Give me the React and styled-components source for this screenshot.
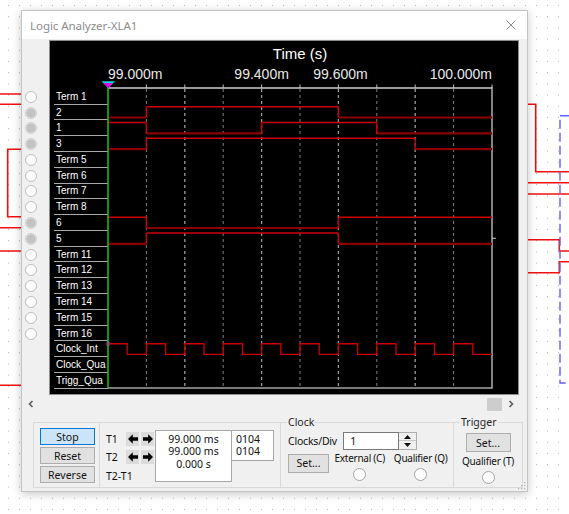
import React from 'react';
import styled, { createGlobalStyle } from 'styled-components';

const GlobalStyle = createGlobalStyle`
  html, body { margin: 0; padding: 0; }
  body {
    width: 569px; height: 514px; overflow: hidden;
    background: #fff;
    font-family: "Noto Sans", "Liberation Sans", sans-serif;
  }
`;

const ROWS = ['Term 1', '2', '1', '3', 'Term 5', 'Term 6', 'Term 7', 'Term 8', '6', '5',
  'Term 11', 'Term 12', 'Term 13', 'Term 14', 'Term 15', 'Term 16', 'Clock_Int', 'Clock_Qua', 'Trigg_Qua'];
const CONNECTED = [false, true, true, true, false, false, false, false, true, true,
  false, false, false, false, false, false];

const X0 = 108;
const DX = 38.4;
const xs = (d) => X0 + DX * d;
const ROW_TOP = 88.9;
const RH = 15.79;
const rowTop = (r) => ROW_TOP + RH * r;

const SIGNALS = [
  { row: 1, segs: [[0, 0], [1, 1], [6, 0]] },
  { row: 2, segs: [[0, 1], [1, 0], [4, 1], [7, 0]] },
  { row: 3, segs: [[0, 0], [1, 1], [8, 0]] },
  { row: 8, segs: [[0, 1], [1, 0], [6, 1]] },
  { row: 9, segs: [[0, 0], [1, 1], [6, 0]] },
];

const Desktop = styled.div`
  position: relative;
  width: 569px;
  height: 514px;
  overflow: hidden;
`;

const Schematic = styled.svg`
  position: absolute;
  left: 0;
  top: 0;
`;

const Window = styled.section`
  position: absolute;
  left: 21px;
  top: 10px;
  width: 507px;
  height: 482px;
  box-sizing: border-box;
  border: 1px solid #c4c4c4;
  background: #f0f0f0;
  box-shadow: 0 2px 9px rgba(0, 0, 0, 0.22);
  display: flex;
  flex-direction: column;
`;

const TitleBar = styled.header`
  height: 28px;
  flex: none;
  background: #fff;
  display: flex;
  align-items: center;
  justify-content: space-between;
  padding: 0 11px 0 8px;
`;

const Title = styled.span`
  font-size: 11.6px;
  color: #8d8d8d;
  letter-spacing: -0.1px;
`;

const MainRow = styled.div`
  display: flex;
  flex: none;
  height: 356px;
  padding-top: 1px;
  box-sizing: border-box;
`;

const RadioColumn = styled.div`
  width: 27px;
  flex: none;
  box-sizing: border-box;
  padding: 48.9px 0 0 3px;
  display: flex;
  flex-direction: column;
`;

const RadioSlot = styled.div`
  height: ${RH}px;
  display: flex;
  align-items: center;
`;

const PinRadio = styled.span`
  width: 12px;
  height: 12px;
  box-sizing: border-box;
  border-radius: 50%;
  border: 1px solid ${(p) => (p.$on ? '#cfcfcf' : '#bdbdbd')};
  background: ${(p) => (p.$on
    ? 'radial-gradient(circle, #c3c3c3 0 4.3px, #e6e6e6 4.8px)'
    : '#fff')};
`;

const Panel = styled.div`
  width: 470px;
  height: 355px;
  flex: none;
  box-sizing: border-box;
  border: 1px solid #8e8e8e;
  background: #000;
  display: flex;
  flex-direction: column;
`;

const TimeTitle = styled.div`
  margin-left: 58px;
  width: 384px;
  height: 25px;
  line-height: 25px;
  text-align: center;
  font-family: "Liberation Sans", Arial, sans-serif;
  font-size: 15px;
  color: #fff;
`;

const ChartRow = styled.div`
  display: flex;
`;

const LabelColumn = styled.div`
  margin-left: 4px;
  width: 54px;
  padding-top: 22.9px;
  display: flex;
  flex-direction: column;
`;

const SignalLabel = styled.div`
  height: ${RH}px;
  box-sizing: border-box;
  border-bottom: 1.6px solid #a9a9a9;
  display: flex;
  align-items: center;
  padding-left: 2px;
  font-family: "Liberation Sans", Arial, sans-serif;
  font-size: 10px;
  color: #fff;
  white-space: nowrap;
`;

const Chart = styled.svg`
  overflow: visible;
  display: block;
  flex: none;
`;

const ScrollRow = styled.div`
  height: 16px;
  margin-top: 1px;
  flex: none;
  display: flex;
  padding: 0 10px 0 3px;
`;

const ScrollButton = styled.div`
  width: 12px;
  display: flex;
  align-items: center;
  justify-content: center;
`;

const ScrollTrack = styled.div`
  flex: 1;
  display: flex;
  justify-content: flex-end;
  padding: 2px 3px 1px 0;
`;

const Thumb = styled.div`
  width: 15px;
  background: #cdcdcd;
`;

const Controls = styled.div`
  display: flex;
  margin: 10px 0 0 11px;
  height: 66px;
  flex: none;
`;

const Group = styled.div`
  position: relative;
  box-sizing: border-box;
  height: 66px;
  width: ${(p) => p.$w}px;
  margin-left: ${(p) => (p.$first ? 0 : -1)}px;
  border: 1px solid #d9d9d9;
  display: flex;
  flex-direction: ${(p) => (p.$column ? 'column' : 'row')};
`;

const Legend = styled.span`
  position: absolute;
  left: 6px;
  top: -8px;
  padding: 0 1px;
  background: #f0f0f0;
  font-size: 10.5px;
  line-height: 14px;
  color: #1e1e1e;
`;

const ButtonCol = styled.div`
  width: 66px;
  box-sizing: border-box;
  border-right: 1px solid #d9d9d9;
  padding: 5px 0 0 6px;
  display: flex;
  flex-direction: column;
  gap: 2px;
`;

const Button = styled.div`
  width: ${(p) => p.$w}px;
  height: ${(p) => p.$h}px;
  box-sizing: border-box;
  border: 1px solid ${(p) => (p.$primary ? '#0078d7' : '#adadad')};
  background: ${(p) => (p.$primary ? '#cce4f7' : '#e1e1e1')};
  display: flex;
  align-items: center;
  justify-content: center;
  font-size: 10.5px;
  color: #111;
  flex: none;
`;

const TimeGrid = styled.div`
  padding: 7px 0 0 6px;
  display: grid;
  grid-template-columns: 20px 29px 77px 42px;
  grid-template-rows: 18px 17px 21px;
  font-size: 10.5px;
  color: #111;
`;

const GridLabel = styled.div`
  display: flex;
  align-items: center;
  white-space: nowrap;
  grid-column: ${(p) => p.$span || 'auto'};
`;

const ArrowPair = styled.div`
  display: flex;
  gap: 2px;
  align-items: center;
`;

const ArrowButton = styled.div`
  width: 13px;
  height: 14px;
  background: #dcdcdc;
  display: flex;
  align-items: center;
  justify-content: center;
`;

const ValueBox = styled.div`
  grid-column: 3;
  grid-row: 1 / 4;
  align-self: start;
  height: 52px;
  box-sizing: border-box;
  border: 1px solid #a8a8a8;
  background: #fff;
  padding-top: 1.5px;
  display: flex;
  flex-direction: column;
  align-items: center;
  line-height: 12.7px;
`;

const HexBox = styled.div`
  grid-column: 4;
  grid-row: 1 / 3;
  align-self: start;
  margin-left: -1px;
  height: 31px;
  box-sizing: border-box;
  border: 1px solid #a8a8a8;
  background: #fff;
  padding: 1.5px 0 0 4px;
  display: flex;
  flex-direction: column;
  line-height: 12.7px;
`;

const ClockBody = styled.div`
  padding: 8.7px 0 0 7px;
  display: flex;
  flex-direction: column;
  font-size: 10.5px;
  color: #111;
`;

const FieldRow = styled.div`
  display: flex;
  align-items: ${(p) => (p.$top ? 'flex-start' : 'center')};
  height: ${(p) => p.$h}px;
  margin-top: ${(p) => p.$mt || 0}px;
`;

const FieldLabel = styled.span`
  width: 55.3px;
  white-space: nowrap;
  letter-spacing: -0.2px;
`;

const NumberInput = styled.div`
  width: 56px;
  height: 18.3px;
  box-sizing: border-box;
  border: 1px solid #7a7a7a;
  background: #fff;
  padding-left: 6px;
  display: flex;
  align-items: center;
`;

const Spinner = styled.div`
  width: 17.4px;
  height: 18.3px;
  box-sizing: border-box;
  border: 1px solid #adadad;
  border-left: none;
  background: #f0f0f0;
  display: flex;
  flex-direction: column;
`;

const SpinHalf = styled.div`
  flex: 1;
  display: flex;
  align-items: center;
  justify-content: center;
  border-top: ${(p) => (p.$lower ? '1px solid #c8c8c8' : 'none')};
`;

const Option = styled.div`
  width: ${(p) => p.$w}px;
  margin-left: ${(p) => p.$ml}px;
  margin-top: -1.5px;
  display: flex;
  flex-direction: column;
  align-items: center;
  white-space: nowrap;
  line-height: 13px;
  font-size: 10px;
  letter-spacing: -0.25px;
`;

const RoundRadio = styled.span`
  width: 13px;
  height: 13px;
  box-sizing: border-box;
  border-radius: 50%;
  border: 1px solid #a3a3a3;
  background: #fff;
  margin-top: ${(p) => p.$mt}px;
`;

const TriggerBody = styled.div`
  padding-top: 10px;
  display: flex;
  flex-direction: column;
  align-items: center;
  font-size: 10.5px;
  color: #111;
`;

const TriggerText = styled.span`
  margin-top: 3px;
  line-height: 13px;
  white-space: nowrap;
  font-size: 10px;
  letter-spacing: -0.2px;
`;

const Grip = styled.svg`
  position: absolute;
  right: 1px;
  bottom: 1px;
`;

const ArrowIcon = ({ dir }) => (
  <svg width="10" height="10" viewBox="0 0 10 10">
    <path
      d="M0 5 L4.8 0.2 L4.8 3.3 L10 3.3 L10 6.7 L4.8 6.7 L4.8 9.8 Z"
      fill="#000"
      transform={dir === 'right' ? 'translate(10 0) scale(-1 1)' : undefined}
    />
  </svg>
);

const Chevron = ({ dir }) => (
  <svg width="6" height="8" viewBox="0 0 6 8">
    <path
      d={dir === 'left' ? 'M4.5 1 L1.5 4 L4.5 7' : 'M1.5 1 L4.5 4 L1.5 7'}
      fill="none"
      stroke="#5a5a5a"
      strokeWidth="1.6"
    />
  </svg>
);

function SignalTrace({ row, segs }) {
  const top = rowTop(row);
  const hi = top + 2;
  const lo = top + 12.8;
  const parts = [];
  segs.forEach(([d, lvl], i) => {
    const end = i + 1 < segs.length ? segs[i + 1][0] : 10;
    const y = lvl ? hi : lo;
    parts.push(
      <line key={`h${i}`} x1={xs(d)} x2={xs(end)} y1={y} y2={y}
        stroke={lvl ? '#d00000' : '#8a0000'} strokeWidth={lvl ? 1.4 : 2.2} />
    );
    if (i > 0) {
      parts.push(
        <line key={`v${i}`} x1={xs(d)} x2={xs(d)} y1={hi} y2={lo}
          stroke="#d00000" strokeWidth="1.4" />
      );
    }
  });
  return <g>{parts}</g>;
}

function ClockTrace() {
  const top = rowTop(16);
  const hi = top + 2.2;
  const lo = top + 12.8;
  let d = `M${X0} ${hi}`;
  for (let k = 0; k < 10; k++) {
    const m = xs(k) + DX / 2;
    const b = xs(k + 1);
    d += ` L${m} ${hi} L${m} ${lo} L${b} ${lo}`;
    if (k < 9) d += ` L${b} ${hi}`;
  }
  return (
    <g>
      <path d={d} fill="none" stroke="#cc0000" strokeWidth="1.3" />
      <circle cx={X0} cy={hi} r="2" fill="none" stroke="#c000c0" strokeWidth="1" />
    </g>
  );
}

function WaveChart() {
  const divs = Array.from({ length: 11 }, (_, i) => i);
  return (
    <Chart width="392" height="326" viewBox="108 66 392 326">
      <g fontFamily='"Liberation Sans", Arial, sans-serif' fontSize="14" fill="#e8e8e8">
        <text x={108} y={78.5} textAnchor="start">99.000m</text>
        <text x={xs(4)} y={78.5} textAnchor="middle">99.400m</text>
        <text x={340.5} y={78.5} textAnchor="middle">99.600m</text>
        <text x={492} y={78.5} textAnchor="end">100.000m</text>
      </g>
      {divs.slice(1, 10).map((i) => (
        <line key={`g${i}`} x1={xs(i)} x2={xs(i)} y1={89} y2={388}
          stroke={i % 2 === 0 ? '#9a9a9a' : '#7e7e7e'} strokeWidth={i % 2 === 0 ? 1.3 : 1}
          strokeDasharray="3 3" />
      ))}
      {divs.map((i) => (
        <line key={`t${i}`} x1={xs(i)} x2={xs(i)} y1={84.5} y2={88}
          stroke="#bdbdbd" strokeWidth="1" />
      ))}
      <line x1={108} x2={492} y1={88} y2={88} stroke="#cfcfcf" strokeWidth="1.4" />
      <line x1={492} x2={492} y1={87} y2={388.5} stroke="#bdbdbd" strokeWidth="1.4" />
      <line x1={108} x2={492} y1={388} y2={388} stroke="#a5a5a5" strokeWidth="1.4" />
      <line x1={492} x2={496} y1={238.3} y2={238.3} stroke="#cfcfcf" strokeWidth="1" />
      {SIGNALS.map((s) => <SignalTrace key={s.row} {...s} />)}
      <ClockTrace />
      <line x1={108} x2={108} y1={88} y2={388} stroke="#19c419" strokeWidth="1.5" />
      <polygon points="101.5,81.3 115,81.3 108.3,88.3" fill="#00d8e0" />
      <polygon points="103.6,83 113,83 108.3,88.3" fill="#e000e0" />
    </Chart>
  );
}

function SchematicLayer() {
  return (
    <Schematic width="569" height="514" viewBox="0 0 569 514">
      <defs>
        <pattern id="dots" x="8" y="5" width="11" height="11.2" patternUnits="userSpaceOnUse">
          <rect x="0" y="0" width="1" height="1" fill="#b4b4b4" />
        </pattern>
      </defs>
      <rect x="0" y="0" width="569" height="514" fill="url(#dots)" />
      <g fill="none" stroke="#f01010" strokeWidth="1.6">
        <path d="M0 94 H22 M0 104.3 H22 M22 149.3 H7.7 V216.7 H22 M0 227.7 H22 M0 251 H22 M0 385.3 H22" />
        <path d="M528 104.3 H535.7 V171.7 H569 M528 182.7 H569 M528 194 H569 M528 239.7 H559.3 V251 H569 M528 272.7 H559.3 V261.7 H569" />
      </g>
      <path d="M569 115.7 H560 V383 H569" fill="none" stroke="#6060ff" strokeWidth="1.4" strokeDasharray="9 4" />
    </Schematic>
  );
}

export default function App() {
  return (
    <>
      <GlobalStyle />
      <Desktop>
        <SchematicLayer />
        <Window>
          <TitleBar>
            <Title>Logic Analyzer-XLA1</Title>
            <svg width="10" height="10" viewBox="0 0 10 10">
              <path d="M0.5 0.5 L9.5 9.5 M9.5 0.5 L0.5 9.5" stroke="#8d8d8d" strokeWidth="1" />
            </svg>
          </TitleBar>
          <MainRow>
            <RadioColumn>
              {CONNECTED.map((on, i) => (
                <RadioSlot key={i}><PinRadio $on={on} /></RadioSlot>
              ))}
            </RadioColumn>
            <Panel>
              <TimeTitle>Time (s)</TimeTitle>
              <ChartRow>
                <LabelColumn>
                  {ROWS.map((r) => <SignalLabel key={r}>{r}</SignalLabel>)}
                </LabelColumn>
                <WaveChart />
              </ChartRow>
            </Panel>
          </MainRow>
          <ScrollRow>
            <ScrollButton><Chevron dir="left" /></ScrollButton>
            <ScrollTrack><Thumb /></ScrollTrack>
            <ScrollButton><Chevron dir="right" /></ScrollButton>
          </ScrollRow>
          <Controls>
            <Group $w={248} $first>
              <ButtonCol>
                <Button $w={55} $h={17} $primary>Stop</Button>
                <Button $w={55} $h={17}>Reset</Button>
                <Button $w={55} $h={17}>Reverse</Button>
              </ButtonCol>
              <TimeGrid>
                <GridLabel>T1</GridLabel>
                <ArrowPair>
                  <ArrowButton><ArrowIcon dir="left" /></ArrowButton>
                  <ArrowButton><ArrowIcon dir="right" /></ArrowButton>
                </ArrowPair>
                <ValueBox>
                  <span>99.000 ms</span>
                  <span>99.000 ms</span>
                  <span>0.000 s</span>
                </ValueBox>
                <HexBox>
                  <span>0104</span>
                  <span>0104</span>
                </HexBox>
                <GridLabel>T2</GridLabel>
                <ArrowPair>
                  <ArrowButton><ArrowIcon dir="left" /></ArrowButton>
                  <ArrowButton><ArrowIcon dir="right" /></ArrowButton>
                </ArrowPair>
                <GridLabel $span="1 / 3">T2-T1</GridLabel>
              </TimeGrid>
            </Group>
            <Group $w={174} $column>
              <Legend>Clock</Legend>
              <ClockBody>
                <FieldRow $h={18.3}>
                  <FieldLabel>Clocks/Div</FieldLabel>
                  <NumberInput>1</NumberInput>
                  <Spinner>
                    <SpinHalf>
                      <svg width="7" height="4" viewBox="0 0 7 4"><path d="M0 4 L3.5 0 L7 4 Z" fill="#111" /></svg>
                    </SpinHalf>
                    <SpinHalf $lower>
                      <svg width="7" height="4" viewBox="0 0 7 4"><path d="M0 0 L3.5 4 L7 0 Z" fill="#111" /></svg>
                    </SpinHalf>
                  </Spinner>
                </FieldRow>
                <FieldRow $h={32} $mt={4} $top>
                  <Button $w={41} $h={19}>Set...</Button>
                  <Option $w={56} $ml={2.7}>
                    <span>External (C)</span>
                    <RoundRadio $mt={3} />
                  </Option>
                  <Option $w={58} $ml={4}>
                    <span>Qualifier (Q)</span>
                    <RoundRadio $mt={3} />
                  </Option>
                </FieldRow>
              </ClockBody>
            </Group>
            <Group $w={70} $column>
              <Legend>Trigger</Legend>
              <TriggerBody>
                <Button $w={45} $h={19}>Set...</Button>
                <TriggerText>Qualifier (T)</TriggerText>
                <RoundRadio $mt={3} />
              </TriggerBody>
            </Group>
          </Controls>
          <Grip width="10" height="10" viewBox="0 0 10 10">
            <g fill="#b0b0b0">
              <rect x="8" y="2" width="1.2" height="1.2" />
              <rect x="5" y="5" width="1.2" height="1.2" />
              <rect x="8" y="5" width="1.2" height="1.2" />
              <rect x="2" y="8" width="1.2" height="1.2" />
              <rect x="5" y="8" width="1.2" height="1.2" />
              <rect x="8" y="8" width="1.2" height="1.2" />
            </g>
          </Grip>
        </Window>
      </Desktop>
    </>
  );
}
